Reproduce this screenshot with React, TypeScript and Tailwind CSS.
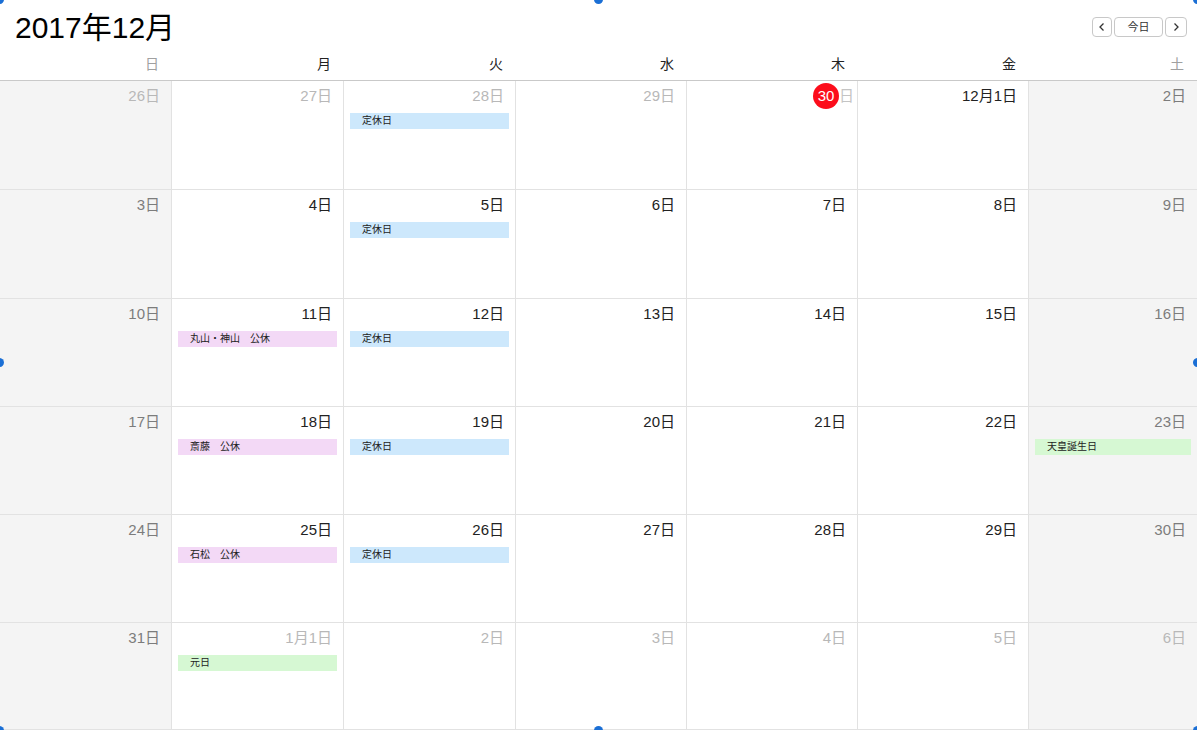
type Ev = { title: string; color: "blue" | "pink" | "green" };
type Day = { label: string; muted?: boolean; today?: boolean; events?: Ev[] };

const closed: Ev = { title: "定休日", color: "blue" };

const weeks: Day[][] = [
  [
    { label: "26日", muted: true },
    { label: "27日", muted: true },
    { label: "28日", muted: true, events: [closed] },
    { label: "29日", muted: true },
    { label: "30", today: true },
    { label: "12月1日" },
    { label: "2日" },
  ],
  [
    { label: "3日" },
    { label: "4日" },
    { label: "5日", events: [closed] },
    { label: "6日" },
    { label: "7日" },
    { label: "8日" },
    { label: "9日" },
  ],
  [
    { label: "10日" },
    { label: "11日", events: [{ title: "丸山・神山　公休", color: "pink" }] },
    { label: "12日", events: [closed] },
    { label: "13日" },
    { label: "14日" },
    { label: "15日" },
    { label: "16日" },
  ],
  [
    { label: "17日" },
    { label: "18日", events: [{ title: "斎藤　公休", color: "pink" }] },
    { label: "19日", events: [closed] },
    { label: "20日" },
    { label: "21日" },
    { label: "22日" },
    { label: "23日", events: [{ title: "天皇誕生日", color: "green" }] },
  ],
  [
    { label: "24日" },
    { label: "25日", events: [{ title: "石松　公休", color: "pink" }] },
    { label: "26日", events: [closed] },
    { label: "27日" },
    { label: "28日" },
    { label: "29日" },
    { label: "30日" },
  ],
  [
    { label: "31日" },
    { label: "1月1日", muted: true, events: [{ title: "元日", color: "green" }] },
    { label: "2日", muted: true },
    { label: "3日", muted: true },
    { label: "4日", muted: true },
    { label: "5日", muted: true },
    { label: "6日", muted: true },
  ],
];

const weekdays = ["日", "月", "火", "水", "木", "金", "土"];

const evColor = {
  blue: "bg-[#cde8fc]",
  pink: "bg-[#f3d9f6]",
  green: "bg-[#d6f8d3]",
};

// column widths taken from the screenshot (right border is inside each cell)
const cols = "grid-cols-[172px_172px_172px_171px_171px_171px_1fr]";

function Handle({ className }: { className: string }) {
  return <span className={`absolute h-[9px] w-[9px] rounded-full bg-[#1b6fd5] ${className}`} />;
}

function Cell({ day, col }: { day: Day; col: number }) {
  const weekend = col === 0 || col === 6;
  const color = day.muted ? "text-[#b8b8b8]" : weekend ? "text-[#7c7c7c]" : "text-[#222]";
  return (
    <div
      className={`flex flex-col border-b border-[#e2e2e2] ${col < 6 ? "border-r" : ""} ${
        weekend ? "bg-[#f4f4f4]" : "bg-white"
      }`}
    >
      <div className="flex h-[32px] items-center justify-end pb-[3px] pr-[11px] text-[15px] leading-none">
        {day.today ? (
          <span className="mr-[-8px] flex items-center">
            <span className="flex h-[26px] w-[26px] items-center justify-center rounded-full bg-[#fc0d1b] text-white">
              30
            </span>
            <span className="text-[#c4c4c4]">日</span>
          </span>
        ) : (
          <span className={color}>{day.label}</span>
        )}
      </div>
      {day.events?.map((e) => (
        <div
          key={e.title}
          className={`ml-[6px] mr-[6px] h-[16px] pl-[12px] text-[10px] leading-[16px] text-[#222] ${evColor[e.color]}`}
        >
          {e.title}
        </div>
      ))}
    </div>
  );
}

export default function App() {
  return (
    <div
      className="relative flex h-[730px] w-full flex-col overflow-hidden bg-white"
      style={{ fontFamily: '"Liberation Sans", "Noto Sans CJK JP", sans-serif' }}
    >
      <header className="flex h-[51px] items-start justify-between pl-[15px] pr-[10px]">
        <h1 className="pt-[8px] text-[30px] leading-[40px] text-black">2017年12月</h1>
        <div className="mt-[17px] flex h-[20px] gap-[2px] text-[11px] text-[#333]">
          <button className="flex w-[20px] items-center justify-center rounded-[4px] border border-[#c8c8c8] bg-white">
            <svg width="8" height="10" viewBox="0 0 8 10" fill="none" stroke="#333" strokeWidth="1.3">
              <path d="M5.5 1.5 2 5l3.5 3.5" />
            </svg>
          </button>
          <button className="flex w-[49px] items-center justify-center rounded-[4px] border border-[#c8c8c8] bg-white">
            今日
          </button>
          <button className="flex w-[22px] items-center justify-center rounded-[4px] border border-[#c8c8c8] bg-white">
            <svg width="8" height="10" viewBox="0 0 8 10" fill="none" stroke="#333" strokeWidth="1.3">
              <path d="M2.5 1.5 6 5 2.5 8.5" />
            </svg>
          </button>
        </div>
      </header>
      <div className={`grid h-[30px] ${cols} border-b border-[#c9c9c9]`}>
        {weekdays.map((w, i) => (
          <div
            key={w}
            className={`flex items-center justify-end pb-[3px] pr-[13px] text-[14px] ${
              i === 0 || i === 6 ? "text-[#a0a0a0]" : "text-[#222]"
            }`}
          >
            {w}
          </div>
        ))}
      </div>
      <div className={`grid flex-1 ${cols} grid-rows-[109px_109px_108px_108px_108px_1fr]`}>
        {weeks.map((week, r) => week.map((d, c) => <Cell key={`${r}-${c}`} day={d} col={c} />))}
      </div>
      <Handle className="left-[-5px] top-[-5px]" />
      <Handle className="left-[594px] top-[-5px]" />
      <Handle className="right-[-5px] top-[-5px]" />
      <Handle className="left-[-5px] top-[358px]" />
      <Handle className="right-[-5px] top-[358px]" />
      <Handle className="bottom-[-5px] left-[-5px]" />
      <Handle className="bottom-[-5px] left-[594px]" />
      <Handle className="bottom-[-5px] right-[-5px]" />
    </div>
  );
}
